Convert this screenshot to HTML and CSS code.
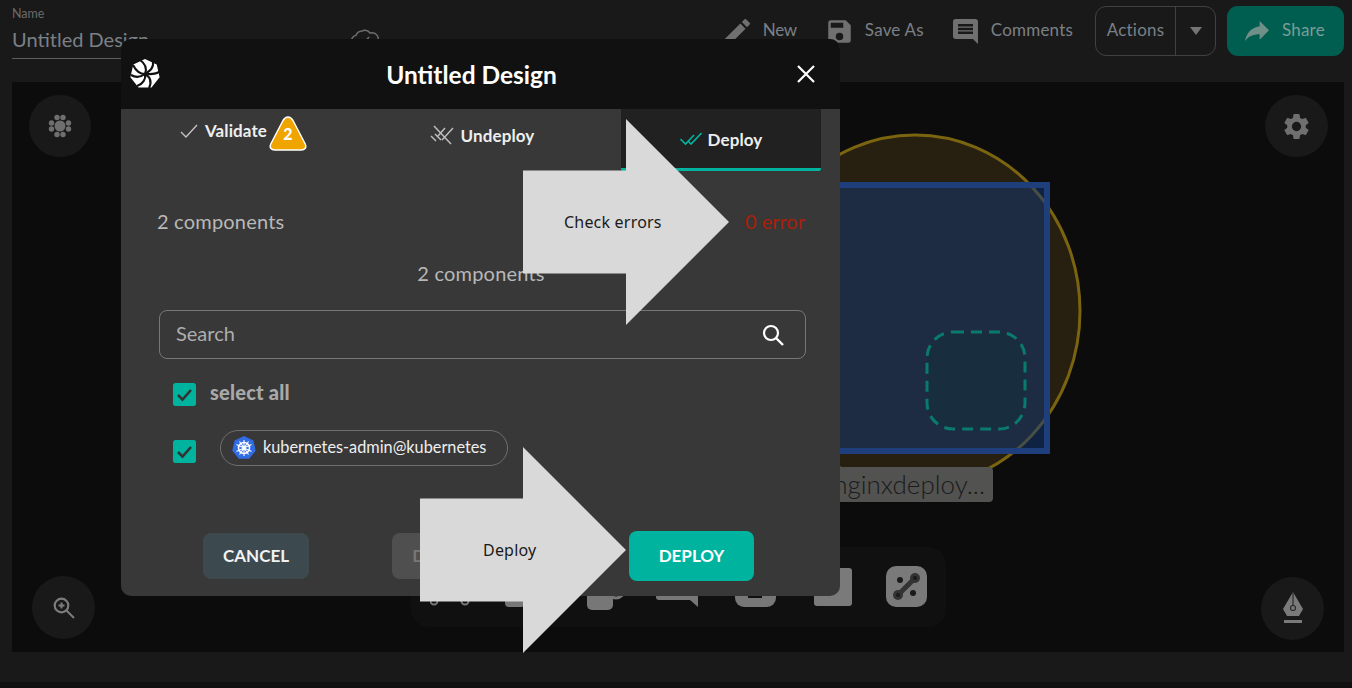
FILE: index.html
```html
<!DOCTYPE html>
<html lang="en">
<head>
<meta charset="utf-8">
<title>Untitled Design</title>
<link rel="stylesheet" href="styles.css">
</head>
<body>
<div class="app">
  <header class="topbar">
    <div class="name-field">
      <span class="name-label">Name</span>
      <span class="name-value">Untitled Design</span>
    </div>
    <svg class="cloud" viewBox="0 0 30 24" width="30" height="24"><path d="M7 20a6 6 0 0 1-1-11.800A7 7 0 0 1 12 4a6 6 0 0 1 8 2 6 6 0 0 1 4 12l-1 2" fill="none" stroke="#6e6e6e" stroke-width="1.500"/><path d="M11 13l3 3 5-6" fill="none" stroke="#6e6e6e" stroke-width="1.500"/></svg>
    <nav class="top-actions">
      <span class="top-item"><svg class="top-icon" viewBox="3 3 18 18"><path d="M3 17.250V21h3.750L17.810 9.940l-3.750-3.750L3 17.250zM20.710 7.040a1 1 0 0 0 0-1.410l-2.340-2.340a1 1 0 0 0-1.410 0l-1.830 1.830 3.750 3.750 1.830-1.830z"/></svg><span class="top-text">New</span></span>
      <span class="top-item"><svg class="top-icon" viewBox="2 2 20 20"><path d="M17 3H5a2 2 0 0 0-2 2v14a2 2 0 0 0 2 2h14a2 2 0 0 0 2-2V7l-4-4zm-5 16a3 3 0 1 1 0-6 3 3 0 0 1 0 6zm3-10H5V5h10v4z"/></svg><span class="top-text">Save As</span></span>
      <span class="top-item"><svg class="top-icon" viewBox="2 2 20 20"><path d="M21.990 4c0-1.100-.890-2-1.990-2H4c-1.100 0-2 .900-2 2v12c0 1.100.900 2 2 2h14l4 4-.010-18zM18 14H6v-2h12v2zm0-3H6V9h12v2zm0-3H6V6h12v2z"/></svg><span class="top-text">Comments</span></span>
      <span class="actions-btn"><span class="actions-label"><span class="top-text">Actions</span></span><span class="actions-caret"><i class="caret"></i></span></span>
      <span class="share-btn"><svg class="share-icon" viewBox="3 5 18 15"><path d="M14 9V5l7 7-7 7v-4.100c-5 0-8.500 1.600-11 5.100 1-5 4-10 11-11z"/></svg><span class="top-text">Share</span></span>
    </nav>
  </header>

  <main class="canvas">
    <svg class="diagram" viewBox="12 82 1332 570" width="1332" height="570">
      <ellipse cx="915" cy="311" rx="165" ry="176" fill="#271f0f" stroke="#7a6410" stroke-width="3"/>
      <rect x="760" y="185" width="287" height="266" fill="#14377880" stroke="#1e3f7c" stroke-width="6"/>
      <rect x="927" y="332" width="98" height="97" rx="26" fill="#182e3e" stroke="#0a7a6c" stroke-width="3" stroke-dasharray="11 7"/>
    </svg>
    <div class="node-label">nginxdeploy...</div>

    <span class="fab fab-tl"><svg class="fab-icon" viewBox="0 0 24 24"><g fill="#6f6f6f"><circle cx="12" cy="12" r="5.500"/><circle cx="9" cy="3.500" r="2.700"/><circle cx="15" cy="3.500" r="2.700"/><circle cx="3.500" cy="9" r="2.700"/><circle cx="20.500" cy="9" r="2.700"/><circle cx="3.500" cy="15" r="2.700"/><circle cx="20.500" cy="15" r="2.700"/><circle cx="9" cy="20.500" r="2.700"/><circle cx="15" cy="20.500" r="2.700"/></g></svg></span>
    <span class="fab fab-tr"><svg class="fab-icon gear" viewBox="0 0 24 24"><path fill="#6f6f6f" d="M19.140 12.940c.040-.300.060-.610.060-.940s-.020-.640-.070-.940l2.030-1.580a.490.490 0 0 0 .120-.610l-1.920-3.320a.490.490 0 0 0-.590-.220l-2.390.960a7 7 0 0 0-1.620-.940l-.360-2.540a.480.480 0 0 0-.480-.410h-3.840a.470.470 0 0 0-.470.410l-.360 2.540c-.590.240-1.130.570-1.620.940l-2.390-.960a.480.480 0 0 0-.590.220L2.740 8.870a.480.480 0 0 0 .120.610l2.030 1.580c-.050.300-.090.630-.090.940s.020.640.070.940l-2.030 1.580a.490.490 0 0 0-.120.610l1.920 3.320c.120.220.370.290.590.220l2.390-.960c.500.380 1.030.700 1.620.940l.360 2.540c.050.240.240.410.480.410h3.840c.240 0 .440-.170.470-.410l.360-2.540c.590-.240 1.130-.560 1.620-.940l2.390.960c.220.080.470 0 .590-.220l1.920-3.320a.480.480 0 0 0-.120-.610l-2.010-1.580zM12 15.600a3.600 3.600 0 1 1 0-7.200 3.600 3.600 0 0 1 0 7.200z"/></svg></span>
    <span class="fab fab-bl"><svg class="fab-icon" viewBox="0 0 24 24"><circle cx="9.500" cy="9.500" r="6.800" fill="none" stroke="#7c7c7c" stroke-width="2.200"/><path d="M14.500 14.500l7.500 7.500M9.500 6.500v6M6.500 9.500h6" fill="none" stroke="#7c7c7c" stroke-width="2"/></svg></span>
    <span class="fab fab-br"><svg class="fab-icon pen" viewBox="0 0 24 34"><path fill="#7a7a7a" d="M12 0l10 17-4 7H6l-4-7z"/><path d="M12 0v14" stroke="#2a2a2a" stroke-width="1.200"/><circle cx="12" cy="16" r="2.500" fill="none" stroke="#2a2a2a" stroke-width="1.200"/><rect x="3" y="28" width="18" height="3" fill="#7a7a7a"/></svg></span>

    <div class="toolbar">
      <svg class="tool tool-a" viewBox="0 0 40 40"><path d="M2 30h15M22 30h16" stroke="#777" stroke-width="3"/><circle cx="4" cy="33" r="3.500" fill="#101010" stroke="#777" stroke-width="2"/><circle cx="35" cy="33" r="3.500" fill="#101010" stroke="#777" stroke-width="2"/></svg>
      <svg class="tool tool-b" viewBox="0 0 20 40"><rect y="6" width="20" height="32" rx="4" fill="#777"/></svg>
      <svg class="tool tool-c" viewBox="0 0 38 40"><rect y="4" width="26" height="35" rx="5" fill="#777"/><circle cx="29" cy="19" r="8" fill="none" stroke="#777" stroke-width="3"/></svg>
      <svg class="tool tool-d" viewBox="0 0 42 38"><path d="M0 3h42v35l-8-7H3a3 3 0 0 1-3-3z" fill="#777"/></svg>
      <svg class="tool tool-e" viewBox="0 0 41 40"><rect width="41" height="40" rx="9" fill="#777"/><rect x="13" y="24" width="14" height="7" fill="#101010"/></svg>
      <svg class="tool tool-f" viewBox="0 0 38 38"><rect width="38" height="38" rx="3" fill="#7a7a7a"/></svg>
      <svg class="tool tool-g" viewBox="0 0 41 41"><rect width="41" height="41" rx="10" fill="#7a7a7a"/><circle cx="14" cy="14" r="3" fill="#1a1a1a"/><circle cx="27" cy="27" r="3" fill="#1a1a1a"/><path d="M12 29L29 12" stroke="#333" stroke-width="5"/><circle cx="12" cy="29" r="5" fill="#333"/><circle cx="29" cy="12" r="5" fill="#333"/><circle cx="12" cy="29" r="2" fill="#1a1a1a"/><circle cx="29" cy="12" r="2" fill="#1a1a1a"/></svg>
    </div>
  </main>
  <div class="footer-strip"></div>
  <div class="footer-edge"></div>

  <section class="modal">
    <div class="modal-head">
      <svg class="logo" viewBox="-16 -16 32 32" width="32" height="32">
        <polygon fill="#fff" points="0,-15 11.700,-9.400 14.600,3.300 6.500,13.500 -6.500,13.500 -14.600,3.300 -11.700,-9.400"/>
        <g fill="none" stroke="#111" stroke-width="2.100">
          <path d="M0 0C2-5 1-10-5-14"/><path d="M0 0C5-3 9-6 8-13"/><path d="M0 0C6 0 11 1 15-3"/><path d="M0 0C5 3 7 8 4 14"/><path d="M0 0C1 5-2 10-8 12"/><path d="M0 0C-4 3-9 4-14 1"/><path d="M0 0C-5 0-9-3-12-9"/>
        </g>
      </svg>
      <h1 class="modal-title">Untitled Design</h1>
      <svg class="close" viewBox="0 0 18 18" width="18" height="18"><path d="M1 1l16 16M17 1L1 17" stroke="#fff" stroke-width="2.200"/></svg>
    </div>
    <div class="modal-body">
      <div class="tabs">
        <div class="tab tab-validate">
          <svg class="tab-icon" viewBox="0 0 18 14" width="18" height="14"><path d="M1 8l5 5L17 1" fill="none" stroke="#c4c4c4" stroke-width="1.300"/></svg>
          <span>Validate</span>
          <span class="badge"><svg viewBox="0 0 38 35" width="38" height="35"><path d="M19 1c2.500 0 3.500 1 5 3.500l12 23c2 4 0 6.500-4 6.500H6c-4 0-6-2.500-4-6.500l12-23C15.500 2 16.500 1 19 1z" fill="#f0a400" stroke="#fff" stroke-width="1.500"/></svg><b class="badge-num">2</b></span>
        </div>
        <div class="tab tab-undeploy">
          <svg class="tab-icon" viewBox="0 0 24 20" width="24" height="20"><path d="M4 1l17 18M23 3L12 15M15 3L8 11M1 11l5 5M5 9l6 6" fill="none" stroke="#bdbdbd" stroke-width="1.500"/></svg>
          <span>Undeploy</span>
        </div>
        <div class="tab tab-deploy">
          <svg class="tab-icon" viewBox="0 0 22 14" width="22" height="14"><path d="M0.500 7l5 5L14 3M8 9l3 3L21.500 1" fill="none" stroke="#00b39f" stroke-width="1.600"/></svg>
          <span>Deploy</span>
        </div>
      </div>
      <div class="summary">
        <span>2 components</span>
        <span class="errors">0 error</span>
      </div>
      <div class="count">2 components</div>
      <div class="search">
        <span class="search-text">Search</span>
        <svg class="search-icon" viewBox="0 0 24 24" width="24" height="24"><circle cx="10" cy="10" r="7" fill="none" stroke="#fff" stroke-width="2.200"/><path d="M15 15l7 7" stroke="#fff" stroke-width="2.400"/></svg>
      </div>
      <div class="select-all">
        <svg class="check" viewBox="0 0 23 23" width="23" height="23"><rect width="23" height="23" rx="2.500" fill="#00b39f"/><path d="M5 12l4.500 4.500L18 7" fill="none" stroke="#333" stroke-width="2.600"/></svg>
        <span class="select-text">select all</span>
      </div>
      <div class="context-row">
        <svg class="check" viewBox="0 0 23 23" width="23" height="23"><rect width="23" height="23" rx="2.500" fill="#00b39f"/><path d="M5 12l4.500 4.500L18 7" fill="none" stroke="#333" stroke-width="2.600"/></svg>
        <div class="chip">
          <svg class="k8s" viewBox="-12 -12 24 24" width="24" height="24">
            <polygon fill="#326ce5" points="0,-12 9.400,-7.500 11.700,2.700 5.200,10.800 -5.200,10.800 -11.700,2.700 -9.400,-7.500"/>
            <circle r="5.500" fill="none" stroke="#fff" stroke-width="1.500"/>
            <path d="M0-8V8M-7.500-3.500L7.500 3.500M7.500-3.500L-7.500 3.500M-4.500 6.500L4.500-6.500M4.500 6.500L-4.500-6.500" stroke="#fff" stroke-width="1.100"/>
            <circle r="1.600" fill="#fff"/>
          </svg>
          <span class="chip-text">kubernetes-admin@kubernetes</span>
        </div>
      </div>
      <div class="modal-actions">
        <button class="btn btn-cancel"><span class="btn-text">CANCEL</span></button>
        <button class="btn btn-disabled"><span class="btn-text">DEPLOY</span></button>
        <button class="btn btn-deploy"><span class="btn-text">DEPLOY</span></button>
      </div>
    </div>
  </section>

  <div class="callout callout-errors"><span class="callout-text">Check errors</span></div>
  <div class="callout callout-deploy"><span class="callout-text">Deploy</span></div>
</div>
</body>
</html>
```
FILE: styles.css
```css
* { box-sizing: border-box; }
html, body { margin: 0; height: 100%; }
body { background: #191919; font-family: "Lato", "Liberation Sans", sans-serif; overflow: hidden; }
.app { position: relative; width: 1352px; height: 688px; overflow: hidden; display: flex; flex-direction: column; }

/* top bar */
.topbar { height: 82px; flex: none; display: flex; align-items: flex-start; padding: 6px 8px 0 12px; }
.name-field { width: 338px; display: flex; flex-direction: column; }
.name-label { font-size: 12.500px; line-height: 15px; color: #6b6b6b; }
.name-value { font-size: 20px; line-height: 24px; margin-top: 6px; padding-bottom: 7px; color: #7b8087; border-bottom: 1px solid #5c5c5c; }
.cloud { margin-top: 21px; flex: none; }
.top-actions { margin-left: auto; display: flex; align-items: center; height: 50px; }
.top-item { display: flex; align-items: center; color: #7b8087; }
.top-text { font-size: 17px; letter-spacing: .2px; line-height: 20px; margin-bottom: 2px; }
.top-item:nth-child(1) { margin-right: 30px; }
.top-item:nth-child(2) { margin-right: 29px; }
.top-item:nth-child(3) { margin-right: 22px; }
.top-item:nth-child(1) .top-text { letter-spacing: -.3px; }
.top-icon { width: 25px; height: 25px; fill: #707070; margin-right: 13px; flex: none; }
.actions-btn { width: 121px; height: 50px; border: 1px solid #414141; border-radius: 11px; display: flex; margin-right: 11px; }
.actions-label { width: 80px; display: flex; align-items: center; justify-content: center; color: #7b8087; border-right: 1px solid #414141; }
.actions-caret { flex: 1; display: flex; align-items: center; justify-content: center; }
.caret { width: 0; height: 0; border-left: 6px solid transparent; border-right: 6px solid transparent; border-top: 8px solid #757575; }
.share-btn { width: 117px; height: 50px; border-radius: 11px; background: #005e50; display: flex; align-items: center; padding-left: 18px; color: #7c9c96; }
.share-icon { width: 24px; height: 20px; fill: #6f8f88; margin-right: 13px; }

/* canvas */
.canvas { position: relative; height: 570px; flex: none; margin: 0 8px 0 12px; background: #0c0c0c; }
.diagram { position: absolute; inset: 0; }
.node-label { position: absolute; left: 780px; top: 385px; width: 201px; height: 35px; padding-right: 8px; background: #525250; border-radius: 4px; font-size: 26px; font-weight: 300; line-height: 35px; text-align: right; color: #1a1a1a; }
.fab { position: absolute; width: 62px; height: 62px; border-radius: 50%; background: #191919; display: flex; align-items: center; justify-content: center; }
.fab-tl { left: 17px; top: 13px; }
.fab-tr { left: 1253px; top: 13px; width: 63px; }
.fab-bl { left: 20px; top: 494px; width: 63px; height: 63px; }
.fab-br { left: 1249px; top: 495px; width: 63px; height: 63px; }
.fab-icon { width: 24px; height: 24px; }
.gear { width: 31px; height: 31px; }
.pen { width: 24px; height: 34px; }
.toolbar { position: absolute; left: 399px; top: 465px; width: 535px; height: 80px; border-radius: 18px; background: #101010; }
.tool { position: absolute; }
.tool-a { left: 19px; top: 21px; width: 40px; height: 40px; }
.tool-b { left: 94px; top: 22px; width: 20px; height: 40px; }
.tool-c { left: 176px; top: 24px; width: 38px; height: 40px; }
.tool-d { left: 245px; top: 22px; width: 42px; height: 38px; }
.tool-e { left: 324px; top: 20px; width: 41px; height: 40px; }
.tool-f { left: 403px; top: 21px; width: 38px; height: 38px; }
.tool-g { left: 475px; top: 19px; width: 41px; height: 41px; }
.footer-strip { height: 30px; flex: none; background: #191919; }
.footer-edge { flex: 1; background: #101010; }

/* modal */
.modal { position: absolute; left: 121px; top: 39px; width: 719px; height: 557px; border-radius: 10px; overflow: hidden; background: #383838; display: flex; flex-direction: column; }
.modal-head { position: relative; height: 70px; flex: none; background: #111; display: flex; align-items: center; justify-content: center; padding-right: 18px; }
.logo { position: absolute; left: 8px; top: 19px; }
.close { position: absolute; left: 676px; top: 26px; }
.modal-title { margin: 0; font-size: 24.500px; font-weight: 700; color: #fff; }
.modal-body { flex: 1; display: flex; flex-direction: column; min-height: 0; }
.tabs { display: flex; height: 62px; flex: none; padding-right: 19px; }
.tab { display: flex; align-items: center; align-self: flex-start; font-size: 17px; letter-spacing: .1px; font-weight: 700; color: #eee; height: 62px; }
.tab-icon { margin-right: 7px; flex: none; }
.tab-validate { width: 222px; padding: 0 0 19px 59px; }
.tab-undeploy { width: 278px; justify-content: center; padding-bottom: 10px; }
.tab-deploy { width: 200px; justify-content: center; background: #212121; border-bottom: 3px solid #00b39f; border-radius: 0 0 2px 2px; padding-top: 1px; }
.tab-deploy .tab-icon { margin-right: 6px; }
.badge { position: relative; width: 38px; height: 35px; margin-left: 2px; margin-top: 5px; flex: none; }
.badge svg { display: block; }
.badge-num { position: absolute; left: 0; right: 0; top: 8px; text-align: center; font-size: 16px; line-height: 20px; color: #fff; }
.summary { display: flex; justify-content: space-between; padding: 0 35px 0 36px; margin-top: 37px; font-size: 20px; letter-spacing: .2px; line-height: 26px; color: #b8b8b8; }
.errors { color: #a8200a; letter-spacing: 0; }
.count { margin-top: 26px; text-align: center; font-size: 20px; letter-spacing: .2px; line-height: 26px; color: #b8b8b8; padding-left: 1px; }
.search { margin: 24px 34px 0 38px; height: 49px; border: 1px solid #777; border-radius: 8px; display: flex; align-items: center; justify-content: space-between; padding: 0 20px 0 16px; font-size: 20px; color: #adadad; }
.search-text { margin-bottom: 3px; }
.select-all { display: flex; align-items: center; margin: 23px 0 0 52px; height: 24px; color: #a9a9a9; }
.select-text { font-size: 20px; font-weight: 900; letter-spacing: .2px; line-height: 24px; margin-bottom: 4px; }
.select-all .check { margin-right: 14px; }
.context-row { display: flex; align-items: flex-start; margin: 24px 0 0 52px; }
.context-row .check { margin-top: 10px; margin-right: 24px; }
.chip { width: 288px; height: 36px; border: 1px solid #6f6f6f; border-radius: 18px; display: flex; align-items: center; padding-left: 11px; color: #eee; }
.chip-text { font-size: 16.300px; margin-bottom: 3px; }
.k8s { margin-right: 7px; flex: none; }
.modal-actions { position: relative; margin-top: 65px; display: flex; align-items: center; padding-left: 82px; height: 50px; }
.btn { border: 0; font-family: inherit; font-size: 17px; font-weight: 700; border-radius: 8px; padding: 0; }
.btn-text { display: block; margin-bottom: 2px; }
.btn-cancel { width: 106px; height: 46px; background: #3c4a50; color: #f2f2f2; }
.btn-disabled { width: 106px; height: 46px; margin-left: 83px; background: #4f4f4f; color: #777; }
.btn-deploy { width: 125px; height: 50px; margin-left: 131px; background: #00b39f; color: #fff; }

/* callout arrows */
.callout { position: absolute; width: 206px; height: 206px; background: #d9d9d9; clip-path: polygon(0 25%, 50% 25%, 50% 0, 100% 50%, 50% 100%, 50% 75%, 0 75%); display: flex; align-items: center; font-family: "Noto Sans", sans-serif; color: #1a1a1a; }
.callout-text { font-size: 16px; letter-spacing: .2px; margin-bottom: 1px; }
.callout-errors { left: 523px; top: 119px; padding-left: 41px; }
.callout-deploy { left: 420px; top: 447px; padding-left: 63px; }
```
